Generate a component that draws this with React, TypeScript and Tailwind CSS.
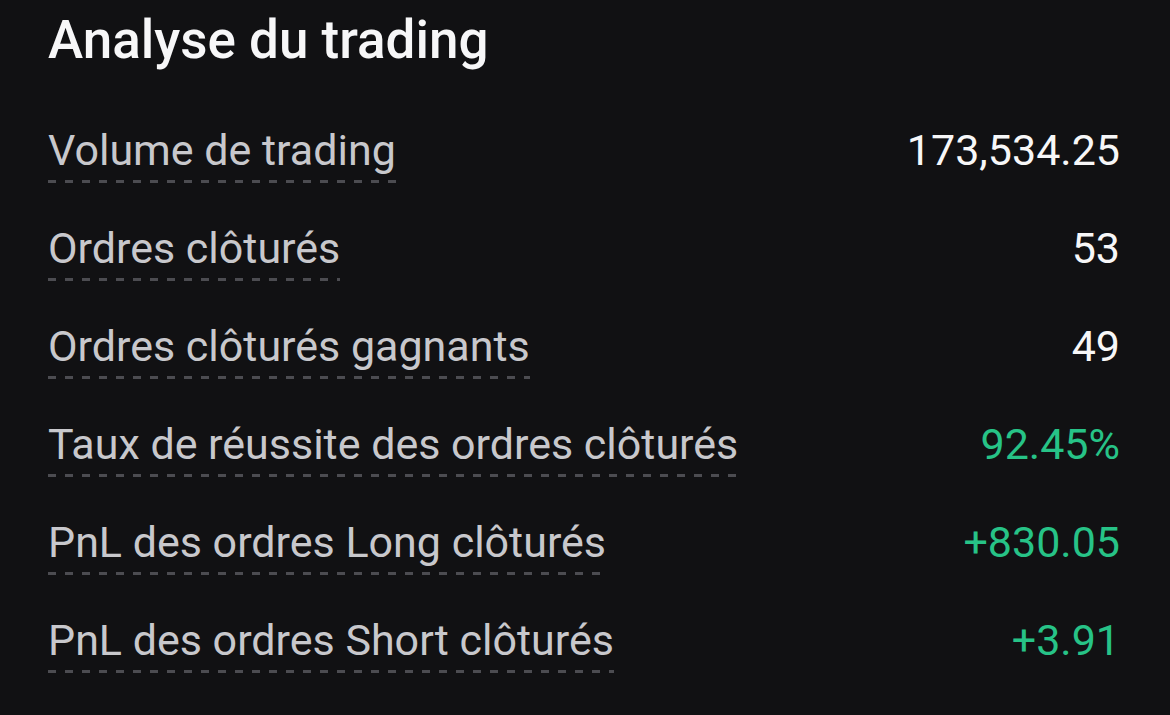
import React from "react";

const rows: { label: string; value: string; green?: boolean }[] = [
  { label: "Volume de trading", value: "173,534.25" },
  { label: "Ordres clôturés", value: "53" },
  { label: "Ordres clôturés gagnants", value: "49" },
  { label: "Taux de réussite des ordres clôturés", value: "92.45%", green: true },
  { label: "PnL des ordres Long clôturés", value: "+830.05", green: true },
  { label: "PnL des ordres Short clôturés", value: "+3.91", green: true },
];

export default function App() {
  return (
    <div
      className="w-[1170px] h-[715px] bg-[#111113] overflow-hidden pl-[48px] pr-[50px] pt-[8px]"
      style={{ fontFamily: "Roboto, 'Noto Sans', sans-serif" }}
    >
      <h1 className="text-[53px] leading-[64px] font-medium text-[#f7f7f8]">
        Analyse du trading
      </h1>
      <div className="mt-[52px] flex flex-col gap-[39px]">
        {rows.map((r) => (
          <div key={r.label} className="flex items-start justify-between">
            <div className="flex flex-col">
              <span className="text-[43px] leading-[52px] text-[#c8c8cc]">{r.label}</span>
              <span className="mt-[4px] h-[3px] w-full bg-[repeating-linear-gradient(90deg,#4c4c51_0px,#4c4c51_8px,transparent_8px,transparent_17px)]" />
            </div>
            <span
              className={`text-[43px] leading-[52px] ${r.green ? "text-[#27c387]" : "text-[#f7f7f8]"}`}
            >
              {r.value}
            </span>
          </div>
        ))}
      </div>
    </div>
  );
}
